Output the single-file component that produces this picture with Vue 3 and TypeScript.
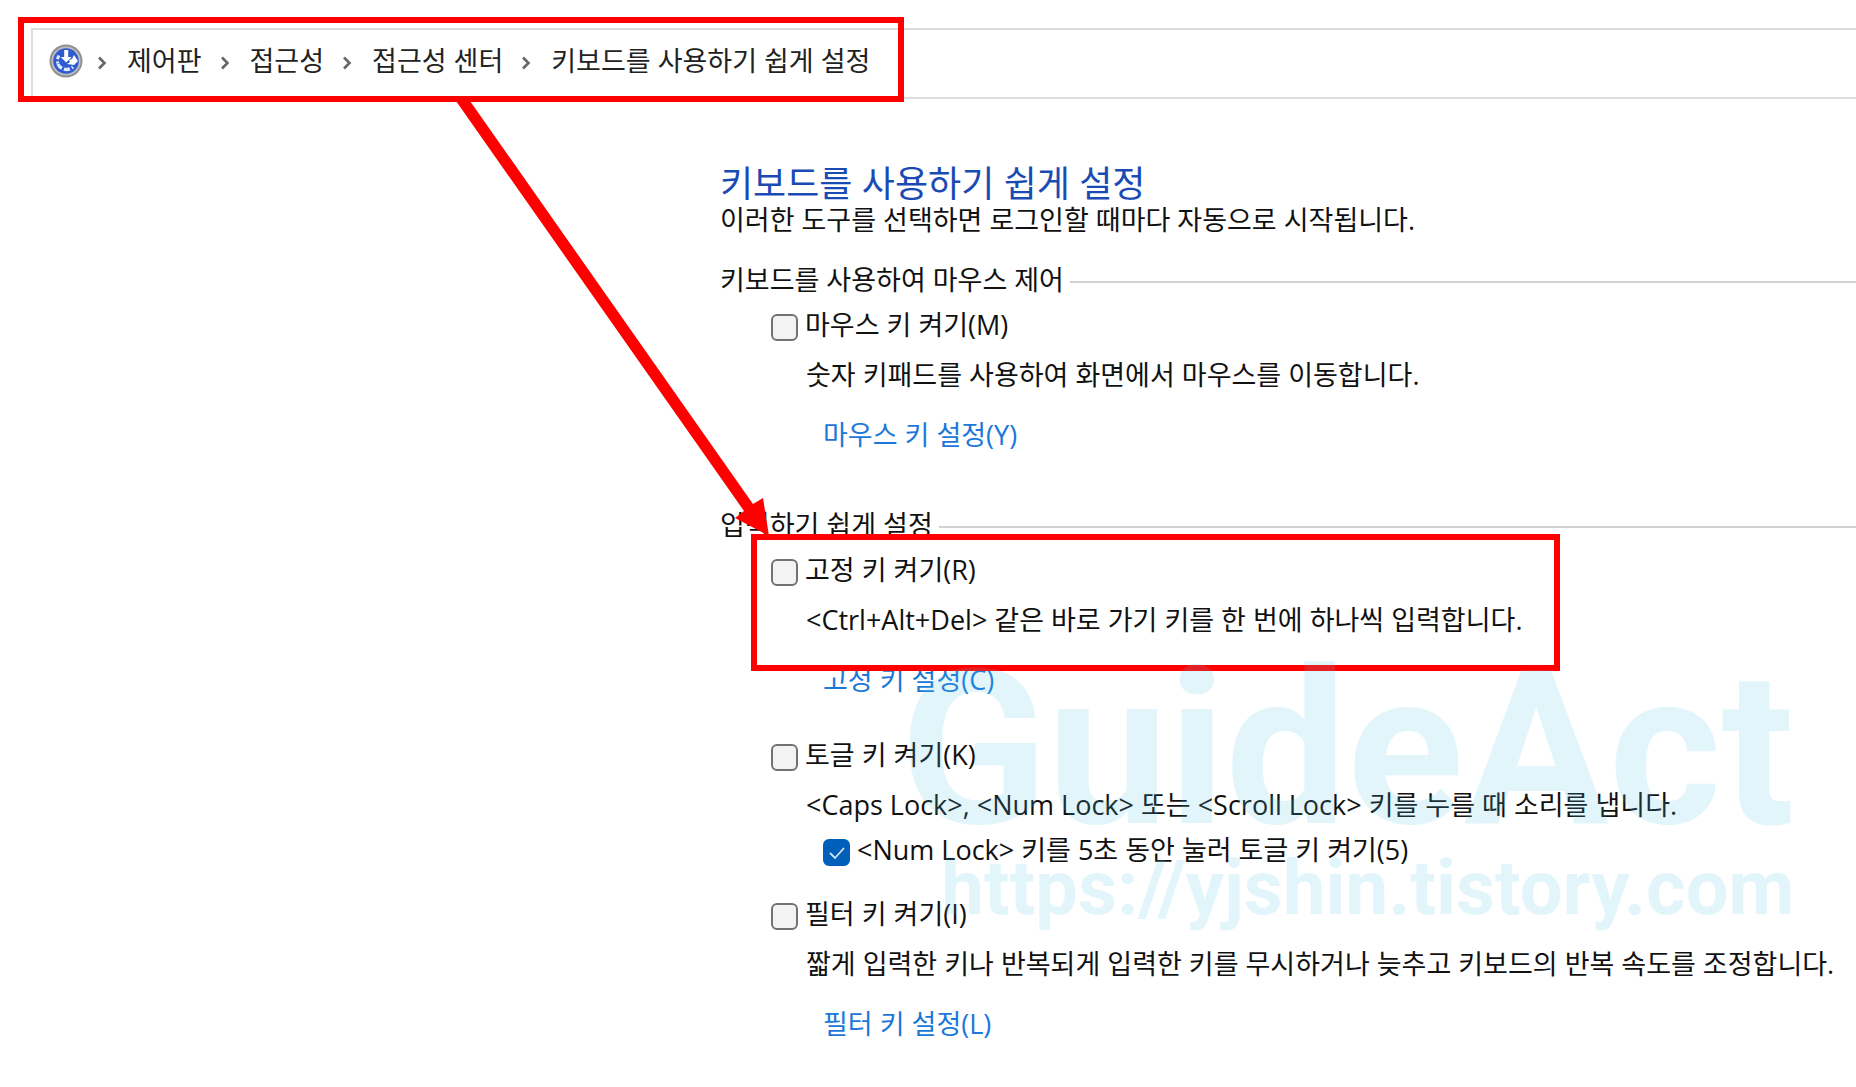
<script setup lang="ts">
interface Option {
  id: string
  label: string
  description: string
  link?: string
  extra?: string
}

interface Section {
  title: string
  options: Option[]
}

const crumbs: string[] = ['제어판', '접근성', '접근성 센터', '키보드를 사용하기 쉽게 설정']

const sections: Section[] = [
  {
    title: '키보드를 사용하여 마우스 제어',
    options: [
      {
        id: 'mouse-keys',
        label: '마우스 키 켜기(M)',
        description: '숫자 키패드를 사용하여 화면에서 마우스를 이동합니다.',
        link: '마우스 키 설정(Y)',
      },
    ],
  },
  {
    title: '입력하기 쉽게 설정',
    options: [
      {
        id: 'sticky-keys',
        label: '고정 키 켜기(R)',
        description: '<Ctrl+Alt+Del> 같은 바로 가기 키를 한 번에 하나씩 입력합니다.',
        link: '고정 키 설정(C)',
      },
      {
        id: 'toggle-keys',
        label: '토글 키 켜기(K)',
        description: '<Caps Lock>, <Num Lock> 또는 <Scroll Lock> 키를 누를 때 소리를 냅니다.',
        extra: '<Num Lock> 키를 5초 동안 눌러 토글 키 켜기(5)',
      },
      {
        id: 'filter-keys',
        label: '필터 키 켜기(I)',
        description: '짧게 입력한 키나 반복되게 입력한 키를 무시하거나 늦추고 키보드의 반복 속도를 조정합니다.',
        link: '필터 키 설정(L)',
      },
    ],
  },
]
</script>

<template>
  <div class="page">
    <nav class="address" aria-label="주소">
      <svg class="logo" viewBox="0 0 34 34" aria-hidden="true">
        <circle cx="17" cy="17" r="16.5" fill="#8f8f8f" />
        <circle cx="17" cy="17" r="14.6" fill="#bdbdc2" />
        <circle cx="17" cy="17" r="12.8" fill="#2f5bd0" />
        <path d="M10 11.500a9 9 0 0 0-1 8" fill="none" stroke="#dfe8ff" stroke-width="3" stroke-dasharray="4 2" />
        <path d="M9 20a9 8 0 0 0 15 3" fill="none" stroke="#dfe8ff" stroke-width="3.400" stroke-dasharray="6 2" />
        <path d="M15.200 6h4v7h3.500l-5.500 5.500-5.500-5.500h3.500z" fill="#fff" />
        <path d="M25 11l4 6-4 4-7-1 3-2-1-2 3-1z" fill="#fff" />
      </svg>
      <ol class="crumbs">
        <li v-for="crumb in crumbs" :key="crumb" class="crumb">
          <svg class="chevron" viewBox="0 0 10 14" aria-hidden="true">
            <path d="M2 1.500l5.500 5.500-5.500 5.500" fill="none" stroke="#666" stroke-width="2.600" />
          </svg>
          <a href="#">{{ crumb }}</a>
        </li>
      </ol>
    </nav>

    <main class="content">
      <h1>키보드를 사용하기 쉽게 설정</h1>
      <p class="intro">이러한 도구를 선택하면 로그인할 때마다 자동으로 시작됩니다.</p>

      <section v-for="section in sections" :key="section.title" class="section">
        <h2><span>{{ section.title }}</span></h2>
        <div v-for="option in section.options" :key="option.id" class="option">
          <label class="check" :for="option.id">
            <input :id="option.id" type="checkbox" />
            <span>{{ option.label }}</span>
          </label>
          <p class="description">{{ option.description }}</p>
          <label v-if="option.extra" class="check nested" :for="option.id + '-hold'">
            <input :id="option.id + '-hold'" type="checkbox" checked />
            <span>{{ option.extra }}</span>
            <svg class="tick" viewBox="0 0 27 27" aria-hidden="true">
              <path d="M7 14l5 5 9-10" fill="none" stroke="#cfe2f5" stroke-width="1.800" />
            </svg>
          </label>
          <a v-if="option.link" class="settings" href="#">{{ option.link }}</a>
        </div>
      </section>
    </main>

    <div class="mark mark-path"></div>
    <div class="mark mark-option"></div>
    <svg class="arrow" viewBox="0 0 320 440" aria-hidden="true">
      <path d="M6 0H20L303 403L313 397L319 435L285 417L294 410Z" fill="#f00" />
    </svg>

    <div class="watermark" aria-hidden="true">
      <span class="brand">GuideAct</span>
      <span class="url">https://yjshin.tistory.com</span>
    </div>
  </div>
</template>

<style>
body {
  margin: 0;
  background: #fff;
}
</style>

<style scoped>
.page {
  position: relative;
  overflow: hidden;
  min-height: 100vh;
  box-sizing: border-box;
  padding-top: 28px;
  color: #111;
  font: 27px/40px "Open Sans", "Noto Sans CJK KR", sans-serif;
  white-space: nowrap;
}

.address {
  display: flex;
  align-items: center;
  gap: 14px;
  height: 62px;
  margin-left: 31px;
  padding: 0 0 5px 16px;
  border: 2px solid #dedede;
  border-right: 0;
}

.logo {
  width: 34px;
  height: 34px;
}

.crumbs {
  display: flex;
  gap: 18px;
  margin: 0;
  padding: 0;
  list-style: none;
}

.crumb {
  display: flex;
  align-items: center;
  gap: 20px;
}

.crumb a {
  color: #222;
  text-decoration: none;
}

.chevron {
  width: 10px;
  height: 14px;
  margin-top: 4px;
}

.content {
  padding: 65px 0 40px 720px;
}

h1 {
  margin: 0;
  color: #1a4bb4;
  font-size: 36px;
  font-weight: 400;
  line-height: 40px;
}

p {
  margin: 0;
}

.intro {
  line-height: 32px;
}

.section {
  margin-top: 24px;
}

.section + .section {
  margin-top: 50px;
}

h2 {
  display: flex;
  align-items: center;
  gap: 6px;
  margin: 0 0 5px;
  font-size: 27px;
  font-weight: 400;
}

h2::after {
  content: "";
  flex: 1;
  height: 2px;
  margin-top: 4px;
  background: #d2d2d2;
}

.option {
  display: flex;
  flex-direction: column;
  align-items: flex-start;
  padding-left: 51px;
}

.option + .option {
  margin-top: 35px;
}

.option:has(.nested) + .option {
  margin-top: 24px;
}

.check {
  position: relative;
  display: flex;
  align-items: center;
  gap: 7px;
}

.check input {
  appearance: none;
  box-sizing: border-box;
  width: 27px;
  height: 27px;
  margin: 4px 0 0;
  border: 2px solid #727272;
  border-radius: 6px;
  background: #f3f3f3;
}

.check input:checked {
  border-color: #005fb8;
  background: #005fb8;
}

.tick {
  position: absolute;
  top: 9px;
  left: 0;
  width: 27px;
  height: 27px;
  pointer-events: none;
}

.nested {
  margin: 5px 0 0 52px;
}

.description {
  margin: 10px 0 0 35px;
}

.settings {
  margin: 20px 0 0 52px;
  color: #1c78d8;
  text-decoration: none;
}

.mark {
  position: absolute;
  box-sizing: border-box;
  border: 6px solid #f00;
}

.mark-path {
  top: 17px;
  left: 18px;
  width: 886px;
  height: 85px;
}

.mark-option {
  top: 534px;
  left: 751px;
  width: 809px;
  height: 137px;
}

.arrow {
  position: absolute;
  top: 101px;
  left: 450px;
  width: 320px;
  height: 440px;
}

.watermark {
  position: absolute;
  top: 636px;
  left: 900px;
  display: flex;
  flex-direction: column;
  align-items: flex-end;
  color: rgba(79, 194, 230, 0.165);
  font-family: Roboto, sans-serif;
  font-weight: 700;
  pointer-events: none;
}

.brand {
  font-size: 216px;
  line-height: 228px;
}

.url {
  font-size: 76px;
  line-height: 48px;
}
</style>
